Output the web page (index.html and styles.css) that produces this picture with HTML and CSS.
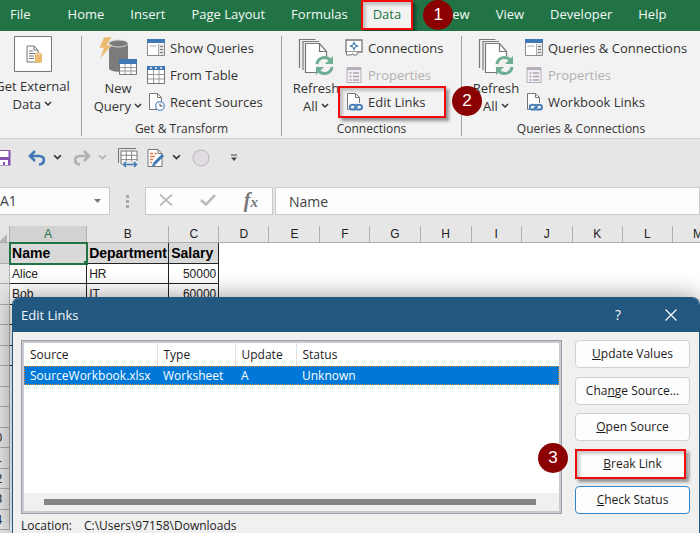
FILE: index.html
```html
<!DOCTYPE html>
<html lang="en">
  <head>
    <meta charset="UTF-8" />
    <meta name="viewport" content="width=device-width, initial-scale=1.0" />
    <title>Edit Links</title>
    <link rel="stylesheet" href="styles.css">
  </head>
  <body>
    <!-- Shared icons -->
    <svg class="sprite" aria-hidden="true">
      <symbol id="i-chevron" viewBox="0 0 8 6">
        <path d="M1 1l3 3 3-3" fill="none" stroke="currentColor" stroke-width="1.5" />
      </symbol>
      <symbol id="i-queries" viewBox="0 0 18 18">
        <path d="M.5.5h17v16H.5z" fill="#fff" stroke="#8a8a8a" />
        <path d="M0 0h18v4H0z" fill="#3f78b5" />
        <path d="M2.500 7h7M11.500 5v11" stroke="#aaa" />
        <path d="M12 5h5v11h-5z" fill="#e4e4e4" />
        <path d="M13 7.500h3M13 10.500h3M13 13.500h3" stroke="#777" />
      </symbol>
      <symbol id="i-table" viewBox="0 0 18 18">
        <path d="M.5.5h17v17H.5z" fill="#fff" stroke="#777" />
        <path d="M0 0h18v4H0z" fill="#3f78b5" />
        <path d="M3 1.500h2l-1 1.500zM8 1.500h2l-1 1.500zM13 1.500h2l-1 1.500z" fill="#fff" stroke="#fff" stroke-width=".5" />
        <path d="M1 8.500h16M1 13h16M6.500 4v13M12 4v13" stroke="#999" />
      </symbol>
      <symbol id="i-recent" viewBox="0 0 18 18">
        <path d="M2.500 16.500V.5h8l4 4v12z" fill="#fff" stroke="#777" />
        <path d="M10.500.5v4h4" fill="none" stroke="#777" />
        <circle cx="13" cy="13" r="4.300" fill="#fff" stroke="#5b93cc" stroke-width="1.300" />
        <path d="M13 10.500V13h2.500" fill="none" stroke="#444" />
      </symbol>
      <symbol id="i-connections" viewBox="0 0 18 18">
        <path d="M1 1h16v12H1z" fill="#fff" stroke="#777" stroke-width="1.300" />
        <path d="M1.500 13v3h5l1-1.500 1 1.500h3l1.500-3" fill="#fff" stroke="#777" />
        <path d="M9 2l1.500 3.500 3.500 1.500-3.500 1.500L9 12 7.500 8.500 4 7l3.500-1.500z" fill="#3f78b5" />
        <circle cx="9" cy="7" r="1.500" fill="#fff" />
      </symbol>
      <symbol id="i-properties" viewBox="0 0 18 18">
        <path d="M2 1.500h14v15H2z" fill="#f3eef5" stroke="#b5b0b7" />
        <path d="M2 1h14v3H2z" fill="#b5b0b7" />
        <path d="M4.500 7h2M8 7h6M4.500 10.500h2M8 10.500h6M4.500 14h2M8 14h6" stroke="#aaa5ac" stroke-width="1.300" />
      </symbol>
      <symbol id="i-links" viewBox="0 0 18 18">
        <path d="M2.500 16.500V.5h8l4 4v12z" fill="#fff" stroke="#777" />
        <path d="M10.500.5v4h4" fill="none" stroke="#777" />
        <rect x="4" y="10" width="14" height="8" fill="#f2f2f2" />
        <path d="M10.500 16.500H7a2.300 2.300 0 0 1 0-4.600h2.500a2.300 2.300 0 0 1 2.200 3M11.500 11.900h3.200a2.300 2.300 0 0 1 0 4.600h-2.500a2.300 2.300 0 0 1-2.200-3" fill="none" stroke="#3f78b5" stroke-width="1.800" />
      </symbol>
      <symbol id="i-refresh" viewBox="0 0 36 38">
        <path d="M1.500 31V2.500h16M5 33V4.500h16" fill="none" stroke="#777" stroke-width="1.200" />
        <path d="M7.500 35.500v-29h14l7 8v21z" fill="#fff" stroke="#777" stroke-width="1.200" />
        <path d="M21.500 6.500v8h7" fill="none" stroke="#777" stroke-width="1.200" />
        <circle cx="26.500" cy="28.500" r="9.500" fill="#f2f2f2" />
        <path d="M19 27c1-7 10-9 14-3M34 30c-1 7-10 9-14 3" fill="none" stroke="#6fae93" stroke-width="3" />
        <path d="M35 19v8h-8zM18 38v-8h8z" fill="#6fae93" />
      </symbol>
    </svg>

    <div class="app">
      <nav class="tabs">
        <a class="tab file" href="#">File</a>
        <a class="tab" href="#">Home</a>
        <a class="tab" href="#">Insert</a>
        <a class="tab" href="#">Page Layout</a>
        <a class="tab" href="#">Formulas</a>
        <a class="tab active marked" href="#">Data</a>
        <a class="tab review" href="#">Review<span class="step step-one">1</span></a>
        <a class="tab" href="#">View</a>
        <a class="tab" href="#">Developer</a>
        <a class="tab" href="#">Help</a>
      </nav>

      <div class="ribbon">
        <section class="group external">
          <button class="big">
            <svg class="big-icon" width="38" height="36" viewBox="0 0 38 36">
              <path d="M.5.5h37v35H.5z" fill="#fff" stroke="#777" />
              <path d="M13 26V10h7l4 4v12z" fill="#fff" stroke="#777" />
              <path d="M20 10v4h4M15 15h4M15 17.500h6M15 20h5M15 22.500h5" fill="none" stroke="#777" />
              <path d="M21 18.500v7c0 2 7 2 7 0v-7z" fill="#ecbb72" />
              <ellipse cx="24.500" cy="18.500" rx="3.500" ry="1.500" fill="#f5d29b" stroke="#e0a857" stroke-width=".6" />
            </svg>
            <span>Get External</span>
            <span>Data <svg class="chevron"><use href="#i-chevron" /></svg></span>
          </button>
        </section>

        <section class="group transform">
          <div class="tools">
            <button class="big">
              <svg class="big-icon" width="40" height="40" viewBox="0 0 40 40">
                <path d="M11 7v25c0 5 19 5 19 0V7z" fill="#7b7b7b" />
                <ellipse cx="20.500" cy="7.500" rx="9.500" ry="3.500" fill="#7b7b7b" stroke="#d5d5d5" />
                <path d="M6 1h8l-5 8h5L2 23l3.500-11H1z" fill="#ecbb72" stroke="#f2f2f2" stroke-width=".5" />
                <path d="M21.500 23.500h17v15h-17z" fill="#fff" stroke="#777" />
                <path d="M21 23h18v5H21z" fill="#3f78b5" />
                <path d="M22 31.500h16M22 35h16M27 28v10M33 28v10" stroke="#999" />
              </svg>
              <span>New</span>
              <span>Query <svg class="chevron"><use href="#i-chevron" /></svg></span>
            </button>
            <div class="stack">
              <button class="small"><svg><use href="#i-queries" /></svg>Show Queries</button>
              <button class="small"><svg><use href="#i-table" /></svg>From Table</button>
              <button class="small"><svg><use href="#i-recent" /></svg>Recent Sources</button>
            </div>
          </div>
          <h2>Get &amp; Transform</h2>
        </section>

        <section class="group connections">
          <div class="tools">
            <button class="big">
              <svg class="big-icon" width="36" height="40"><use href="#i-refresh" /></svg>
              <span>Refresh</span>
              <span>All <svg class="chevron"><use href="#i-chevron" /></svg></span>
            </button>
            <div class="stack">
              <button class="small"><svg><use href="#i-connections" /></svg>Connections</button>
              <button class="small" disabled><svg><use href="#i-properties" /></svg>Properties</button>
              <button class="small marked edit-links"><svg><use href="#i-links" /></svg>Edit Links<span class="step step-two">2</span></button>
            </div>
          </div>
          <h2>Connections</h2>
        </section>

        <section class="group queries">
          <div class="tools">
            <button class="big">
              <svg class="big-icon" width="36" height="40"><use href="#i-refresh" /></svg>
              <span>Refresh</span>
              <span>All <svg class="chevron"><use href="#i-chevron" /></svg></span>
            </button>
            <div class="stack">
              <button class="small"><svg><use href="#i-queries" /></svg>Queries &amp; Connections</button>
              <button class="small" disabled><svg><use href="#i-properties" /></svg>Properties</button>
              <button class="small"><svg><use href="#i-links" /></svg>Workbook Links</button>
            </div>
          </div>
          <h2>Queries &amp; Connections</h2>
        </section>
      </div>

      <div class="quick">
        <button class="save" aria-label="Save">
          <svg width="18" height="18" viewBox="0 0 18 18">
            <path d="M1 1h15.500v15.500H1z" fill="#8653ae" />
            <path d="M4 2h10.500v6H4zM6 11h8v5H6z" fill="#fff" />
            <path d="M9 13h2v3H9z" fill="#8653ae" />
          </svg>
        </button>
        <button aria-label="Undo">
          <svg width="18" height="16" viewBox="0 0 18 16">
            <path d="M2 6h9c7 0 6 8 0 8.500" fill="none" stroke="#3f78b5" stroke-width="2.600" />
            <path d="M7 1L2 6l5 5" fill="none" stroke="#3f78b5" stroke-width="2.600" />
          </svg>
        </button>
        <button aria-label="Undo list"><svg class="chevron"><use href="#i-chevron" /></svg></button>
        <button aria-label="Redo" disabled>
          <svg width="18" height="16" viewBox="0 0 18 16">
            <path d="M16 6H7c-7 0-6 8 0 8.500" fill="none" stroke="#b0b0b0" stroke-width="2.600" />
            <path d="M11 1l5 5-5 5" fill="none" stroke="#b0b0b0" stroke-width="2.600" />
          </svg>
        </button>
        <button aria-label="Redo list" disabled><svg class="chevron"><use href="#i-chevron" /></svg></button>
        <button aria-label="Column width">
          <svg width="20" height="20" viewBox="0 0 20 20">
            <path d="M.5 15V.5H18" fill="none" stroke="#777" />
            <path d="M3 3h16v13H3z" fill="#fff" stroke="#777" />
            <path d="M3 7.300h16M3 11.600h16M8.300 3v13M13.600 3v13" stroke="#888" />
            <path d="M4 13h16v7H4z" fill="#e6e6e6" />
            <path d="M5.500 16.500h13M8 14l-2.500 2.500L8 19M16 14l2.500 2.500L16 19" fill="none" stroke="#3f78b5" stroke-width="1.500" />
          </svg>
        </button>
        <button aria-label="Edit sheet">
          <svg width="18" height="20" viewBox="0 0 18 20">
            <path d="M1 1.500h10l4 4v13H1z" fill="#fff" stroke="#777" />
            <path d="M11 1.500v4h4" fill="none" stroke="#777" />
            <path d="M3 5.500h3M7.500 5.500h2M3 8.500h5M3 11.500h3M3 14.500h2" stroke="#e07a4a" stroke-width="1.400" />
            <path d="M16 7l-9 9" stroke="#3f78b5" stroke-width="3" />
            <path d="M5 18.500l1-3.500 2.500 2.500z" fill="#3f78b5" />
          </svg>
        </button>
        <button aria-label="Sheet list"><svg class="chevron"><use href="#i-chevron" /></svg></button>
        <button class="record" aria-label="Record">
          <svg width="18" height="18" viewBox="0 0 18 18">
            <circle cx="9" cy="9" r="8" fill="#e1dce1" stroke="#bbb5bb" />
          </svg>
        </button>
        <button class="customise" aria-label="Customise">
          <svg width="6" height="8" viewBox="0 0 6 8">
            <path d="M0 1h6" stroke="#444" />
            <path d="M0 3.500h6L3 7z" fill="#444" />
          </svg>
        </button>
      </div>

      <div class="formula-bar">
        <div class="name-box">
          <input type="text" value="A1" aria-label="Name box" />
          <svg width="7" height="5" viewBox="0 0 7 5"><path d="M0 0h7L3.500 4z" fill="#777" /></svg>
        </div>
        <svg class="grip" width="3" height="13" viewBox="0 0 3 13">
          <path d="M0 0h3v3H0zM0 5h3v3H0zM0 10h3v3H0z" fill="#aaa" />
        </svg>
        <div class="entry-buttons">
          <button aria-label="Cancel" disabled>
            <svg width="14" height="12" viewBox="0 0 14 12"><path d="M1 .5l12 11M13 .5L1 11.500" stroke="#b8b8b8" stroke-width="1.800" /></svg>
          </button>
          <button aria-label="Enter" disabled>
            <svg width="16" height="12" viewBox="0 0 16 12"><path d="M1 6l5 4.500L15 1" fill="none" stroke="#bbb" stroke-width="2.600" /></svg>
          </button>
          <button class="fx" aria-label="Insert function"><i>f</i><i class="sub">x</i></button>
        </div>
        <input class="formula" type="text" value="Name" aria-label="Formula" />
      </div>

      <main class="workspace">
        <table class="sheet">
          <colgroup>
            <col class="c-num" />
            <col class="c-a" />
            <col class="c-b" />
            <col class="c-std" />
            <col class="c-std" />
            <col class="c-wide" />
            <col class="c-std" />
            <col class="c-std" />
            <col class="c-wide" />
            <col class="c-std" />
            <col class="c-wide" />
            <col class="c-std" />
            <col class="c-std" />
            <col class="c-wide" />
          </colgroup>
          <thead>
            <tr>
              <th class="corner"><svg width="8" height="8" viewBox="0 0 8 8"><path d="M8 0v8H0z" fill="#b4b4b4" /></svg></th>
              <th class="current">A</th>
              <th>B</th><th>C</th><th>D</th><th>E</th><th>F</th><th>G</th>
              <th>H</th><th>I</th><th>J</th><th>K</th><th>L</th><th>M</th>
            </tr>
          </thead>
          <tbody>
            <tr class="titles">
              <th class="current"></th>
              <td class="selected">Name</td><td>Department</td><td>Salary</td>
            </tr>
            <tr>
              <th>2</th>
              <td>Alice</td><td>HR</td><td class="number">50000</td>
            </tr>
            <tr>
              <th>3</th>
              <td>Bob</td><td>IT</td><td class="number">60000</td>
            </tr>
            <tr><th>4</th><td></td><td></td><td></td></tr>
            <tr><th>5</th><td></td><td></td><td></td></tr>
            <tr><th>6</th><td></td><td></td><td></td></tr>
            <tr><th>7</th></tr>
            <tr><th>8</th></tr>
            <tr><th>9</th></tr>
            <tr><th>10</th></tr>
            <tr><th>11</th></tr>
            <tr><th>12</th></tr>
            <tr><th>13</th></tr>
            <tr><th>14</th></tr>
          </tbody>
        </table>

        <div class="dialog" role="dialog" aria-labelledby="dialogTitle">
          <header class="title-bar">
            <h1 id="dialogTitle">Edit Links</h1>
            <button aria-label="Help">?</button>
            <button aria-label="Close">
              <svg width="12" height="12" viewBox="0 0 12 12"><path d="M.5.5l11 11M11.500.5l-11 11" stroke="#fff" stroke-width="1.200" /></svg>
            </button>
          </header>
          <div class="dialog-body">
            <div class="list">
              <table class="links">
                <thead>
                  <tr>
                    <th class="source">Source</th>
                    <th class="type">Type</th>
                    <th class="update">Update</th>
                    <th>Status</th>
                  </tr>
                </thead>
                <tbody>
                  <tr>
                    <td>SourceWorkbook.xlsx</td>
                    <td>Worksheet</td>
                    <td>A</td>
                    <td>Unknown</td>
                  </tr>
                </tbody>
              </table>
              <div class="scrollbar"><div class="thumb"></div></div>
            </div>
            <div class="actions">
              <button><u>U</u>pdate Values</button>
              <button>Cha<u>n</u>ge Source...</button>
              <button><u>O</u>pen Source</button>
              <button class="break-link"><u>B</u>reak Link<span class="step step-three">3</span></button>
              <button class="default"><u>C</u>heck Status</button>
            </div>
          </div>
          <dl class="location">
            <dt>Location:</dt>
            <dd>C:\Users\97158\Downloads</dd>
          </dl>
        </div>
      </main>
    </div>
  </body>
</html>
```
FILE: styles.css
```css
* {
  box-sizing: border-box;
}

body {
  margin: 0;
  font-family: "Open Sans", "Noto Sans", sans-serif;
  font-size: 13px;
  line-height: 18px;
  color: #333;
}

button {
  margin: 0;
  padding: 0;
  border: none;
  background: none;
  font: inherit;
  color: inherit;
}

.sprite {
  position: absolute;
  width: 0;
  height: 0;
}

.app {
  display: flex;
  flex-direction: column;
  height: 100vh;
  overflow: hidden;
  background-color: #e6e6e6;
}

/* Tabs */
.tabs {
  display: flex;
  flex: none;
  height: 31px;
  background-color: #217346;
}

.tab {
  display: flex;
  align-items: center;
  height: 30px;
  padding: 0 13px 2px;
  color: #f3f8f5;
  text-decoration: none;
  white-space: nowrap;
}

.tab.file {
  padding-left: 10px;
  padding-right: 24px;
}

.tab.active {
  padding: 0 10px 2px;
  background-color: #f2f2f2;
  color: #217346;
}

.tab.review {
  position: relative;
  margin-left: 1px;
}

/* Red frames and numbered steps */
.marked {
  border: 2px solid #f00a0a;
  box-shadow: 3px 3px 3px rgba(0, 0, 0, 0.4), inset 3px 3px 3px rgba(0, 0, 0, 0.2);
}

.step {
  display: flex;
  position: absolute;
  justify-content: center;
  align-items: center;
  width: 30px;
  height: 30px;
  border-radius: 50%;
  background-color: #8b0000;
  color: white;
  font-family: "Liberation Sans", Arial, sans-serif;
  font-size: 17px;
}

.step-one {
  top: 0;
  left: 9px;
}

.step-two {
  top: -2px;
  right: -38px;
}

.step-three {
  top: -8px;
  left: -38px;
}

/* Ribbon */
.ribbon {
  display: flex;
  flex: none;
  height: 108px;
  padding: 5px 0 2px;
  border-bottom: 1px solid #cfcfcf;
  background-color: #f2f2f2;
}

.group {
  display: flex;
  flex: none;
  flex-direction: column;
  border-right: 1px solid #a0a0a0;
}

.group.external {
  width: 82px;
  padding-right: 16px;
  align-items: center;
}

.group.transform {
  width: 200px;
}

.group.connections {
  width: 180px;
}

.group.queries {
  flex: 1 0 auto;
  border-right: none;
}

.group h2 {
  margin: 0;
  font-size: 12px;
  font-weight: normal;
  line-height: 14px;
  text-align: center;
}

.tools {
  display: flex;
  flex: 1;
  align-items: flex-start;
  padding-left: 8px;
}

.transform .tools {
  padding-left: 10px;
}

.big {
  display: flex;
  flex: none;
  flex-direction: column;
  align-items: center;
  white-space: nowrap;
}

.tools .big {
  width: 52px;
}

.big-icon {
  margin-bottom: 3px;
}

.external .big-icon {
  margin-bottom: 5px;
}

.chevron {
  width: 8px;
  height: 6px;
  margin-bottom: 2px;
}

.stack {
  display: flex;
  flex-direction: column;
  align-items: flex-start;
  margin-top: -2px;
}

.small {
  display: flex;
  align-items: center;
  gap: 5px;
  height: 27px;
  padding: 0 3px;
  white-space: nowrap;
}

.small svg {
  flex: none;
  width: 18px;
  height: 18px;
}

.small:disabled {
  color: #b1b1b1;
}

.small.edit-links {
  position: relative;
  height: 32px;
  width: 108px;
  margin: -2px 0 0 -4px;
  padding: 0 5px;
}

/* Quick access toolbar */
.quick {
  display: flex;
  flex: none;
  align-items: center;
  gap: 9px;
  height: 48px;
  padding-bottom: 11px;
}

.quick button {
  display: flex;
  align-items: center;
}

.quick button:disabled {
  color: #b0b0b0;
}

.quick .save {
  margin-left: -6px;
  margin-right: 7px;
}

.quick .chevron {
  width: 9px;
  height: 7px;
  margin: 0 2px 0 -2px;
}

.quick .customise {
  margin-left: 12px;
}

/* Formula bar */
.formula-bar {
  display: flex;
  flex: none;
  align-items: center;
  height: 28px;
}

.formula-bar input {
  min-width: 0;
  padding: 0;
  border: none;
  background: none;
  font: inherit;
  font-size: 14px;
  color: #444;
}

.name-box,
.entry-buttons,
.formula-bar .formula {
  height: 28px;
  border: 1px solid #cacaca;
  background-color: #fdfdfd;
}

.name-box {
  display: flex;
  align-items: center;
  width: 110px;
  padding-right: 8px;
  border-left: none;
}

.name-box input {
  flex: 1;
}

.grip {
  margin: 0 16px;
}

.entry-buttons {
  display: flex;
  align-items: center;
  justify-content: space-between;
  width: 128px;
  padding: 0 14px 0 13px;
}

.fx {
  font-family: "Liberation Serif", "Times New Roman", serif;
  font-size: 20px;
  font-weight: bold;
  color: #777;
}

.fx .sub {
  font-size: 15px;
}

.formula-bar .formula {
  flex: 1;
  margin-left: 2px;
  padding-left: 13px;
}

/* Worksheet */
.workspace {
  position: relative;
  flex: 1;
  min-height: 0;
  overflow: hidden;
  padding-top: 11px;
}

.sheet {
  width: 740px;
  margin-left: -16px;
  border-collapse: separate;
  border-spacing: 0;
  table-layout: fixed;
  background-color: white;
  font-family: "Liberation Sans", Arial, sans-serif;
  font-size: 12px;
  line-height: 14px;
  color: #222;
}

.c-num {
  width: 26px;
}

.c-a {
  width: 77px;
}

.c-b {
  width: 82px;
}

.c-std {
  width: 50px;
}

.c-wide {
  width: 51px;
}

.sheet th,
.sheet td {
  padding: 0;
  white-space: nowrap;
}

.sheet th {
  font-weight: normal;
  background-color: #e6e6e6;
  border-right: 1px solid #b0b0b0;
  border-bottom: 1px solid #ababab;
}

.sheet thead th {
  height: 17px;
}

.sheet .corner {
  padding-right: 2px;
  line-height: 0;
  text-align: right;
  vertical-align: bottom;
}

.sheet tbody th {
  padding-right: 2px;
}

.sheet tbody tr {
  height: 20px;
}

.sheet tbody tr:nth-child(odd) {
  height: 21px;
}

.sheet thead .current {
  background-color: #d2d2d2;
  border-bottom-color: #217346;
  color: #217346;
}

.sheet tbody .current {
  background-color: #d2d2d2;
}

.sheet td {
  padding: 0 2px;
  border-right: 1px solid #222;
  border-bottom: 1px solid #222;
}

.titles td {
  background-color: #d9d9d9;
  font-size: 14px;
  font-weight: bold;
  color: #000;
}

.sheet .selected {
  position: relative;
  outline: 2px solid #217346;
  outline-offset: -1px;
}

.selected::after {
  content: "";
  position: absolute;
  right: -2px;
  bottom: -2px;
  width: 4px;
  height: 4px;
  background-color: #217346;
}

.sheet .number {
  text-align: right;
}

/* Dialog */
.dialog {
  position: absolute;
  top: 82px;
  right: 0;
  bottom: 0;
  left: 12px;
  border: 1px solid #22577f;
  border-bottom: none;
  border-radius: 8px 8px 0 0;
  background-color: #f0f0f0;
  box-shadow: 0 0 24px rgba(0, 0, 0, 0.4);
  font-size: 12px;
  line-height: 16px;
  color: #1c1c1c;
}

.title-bar {
  display: flex;
  align-items: center;
  height: 34px;
  padding: 0 22px 0 8px;
  border-radius: 7px 7px 0 0;
  background-color: #22577f;
  color: #f4f7fa;
}

.title-bar h1 {
  flex: 1;
  margin: 0;
  font-size: 13px;
  font-weight: normal;
}

.title-bar button {
  display: flex;
  margin-left: 44px;
  font-size: 14px;
}

.dialog-body {
  display: flex;
  gap: 13px;
  height: 182px;
  padding: 8px 9px 0 8px;
}

.list {
  display: flex;
  flex: 1;
  flex-direction: column;
  padding: 2px;
  border: 1px solid #9a9fa8;
  background: linear-gradient(white, white) content-box, #c8cad0;
}

.links {
  width: 100%;
  border-collapse: collapse;
}

.links th {
  height: 23px;
  padding: 0 6px;
  border-right: 1px solid #e2e2e2;
  font-weight: normal;
  text-align: left;
}

.links th:last-child {
  border-right: none;
}

.links .source {
  width: 133px;
}

.links .type {
  width: 78px;
}

.links .update {
  width: 61px;
}

.links td {
  height: 19px;
  padding: 0 6px;
  background-color: #0078d7;
  color: white;
}

.links tbody tr {
  outline: 1px dotted #d98b45;
  outline-offset: -1px;
}

.scrollbar {
  margin-top: auto;
  padding: 6px 23px 6px 20px;
  background-color: #f0f0f0;
}

.thumb {
  height: 6px;
  background-color: #858585;
}

.actions {
  display: flex;
  flex: none;
  flex-direction: column;
  justify-content: space-between;
  width: 115px;
}

.actions button {
  position: relative;
  height: 28px;
  border: 1px solid #cdd2d6;
  border-radius: 4px;
  background-color: #fdfdfd;
}

.actions .default {
  border-color: #2f86c9;
}

.break-link::after {
  content: "";
  position: absolute;
  inset: -2px 3px -2px -1px;
  border: 2px solid #f00a0a;
  box-shadow: 3px 3px 3px rgba(0, 0, 0, 0.4), inset 3px 3px 3px rgba(0, 0, 0, 0.2);
}

.location {
  display: flex;
  gap: 12px;
  margin: 0;
  padding: 4px 8px;
}

.location dd {
  margin: 0;
}
```
